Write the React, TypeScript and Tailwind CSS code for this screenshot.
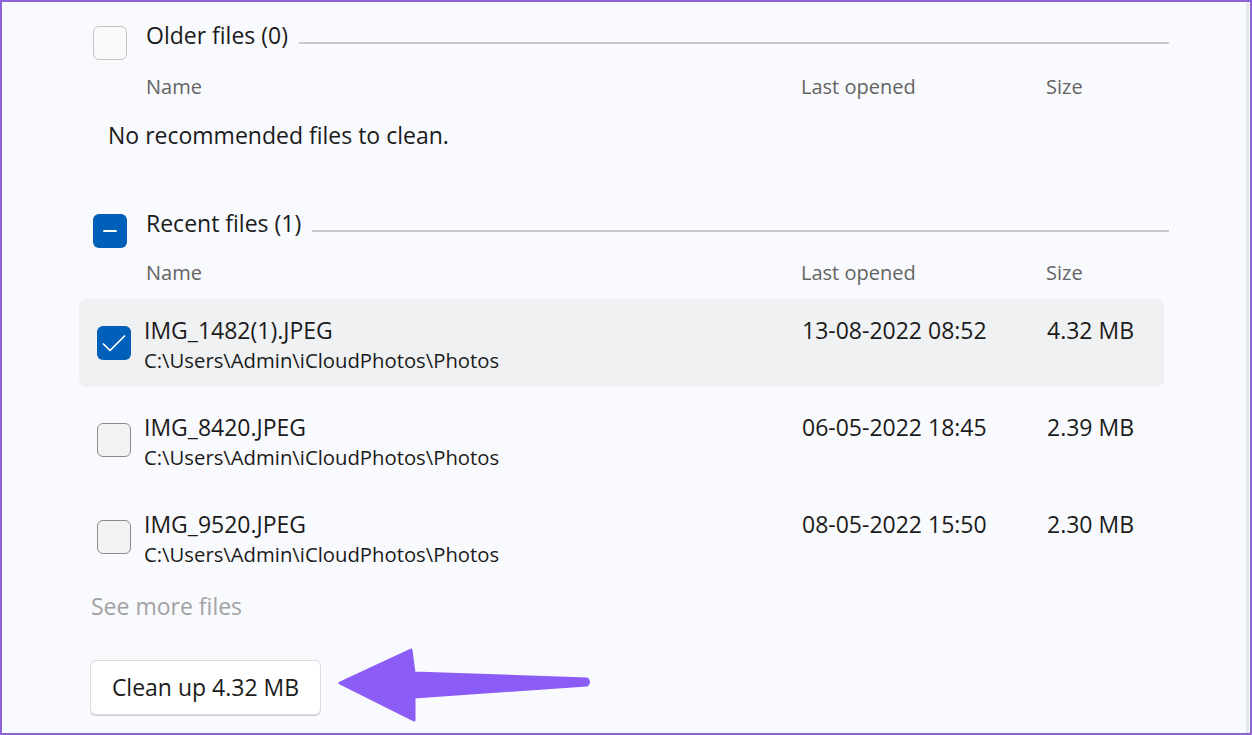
import React from "react";

const FILES = [
  { name: "IMG_1482(1).JPEG", path: "C:\\Users\\Admin\\iCloudPhotos\\Photos", opened: "13-08-2022 08:52", size: "4.32 MB", checked: true },
  { name: "IMG_8420.JPEG", path: "C:\\Users\\Admin\\iCloudPhotos\\Photos", opened: "06-05-2022 18:45", size: "2.39 MB", checked: false },
  { name: "IMG_9520.JPEG", path: "C:\\Users\\Admin\\iCloudPhotos\\Photos", opened: "08-05-2022 15:50", size: "2.30 MB", checked: false },
];

function Box({ state, faded }: { state: "off" | "on" | "mixed"; faded?: boolean }) {
  if (state === "off") {
    return (
      <div
        className={`w-[34px] h-[34px] shrink-0 rounded-[6px] border-[1.5px] ${
          faded ? "border-[#c6c6c8] bg-[#fafafb]" : "border-[#8a8a8a] bg-[#f3f3f4]"
        }`}
      />
    );
  }
  return (
    <div className="w-[34px] h-[34px] shrink-0 rounded-[6px] bg-[#005fb8] flex items-center justify-center">
      {state === "on" ? (
        <svg width="34" height="34" viewBox="0 0 34 34" fill="none">
          <path d="M6.5 18 L13 24.5 L27.5 10" stroke="white" strokeWidth="1.7" strokeLinecap="round" strokeLinejoin="round" />
        </svg>
      ) : (
        <div className="w-[14px] h-[2px] bg-white rounded" />
      )}
    </div>
  );
}

function SectionHeader({ title, state, faded }: { title: string; state: "off" | "mixed"; faded?: boolean }) {
  return (
    <div className="flex items-center h-[34px]">
      <Box state={state} faded={faded} />
      <span className="ml-[19px] text-[23px] leading-[30px] text-[#1b1b1b] -mt-[16px]">{title}</span>
      <div className="flex-1 ml-[11px] h-[2px] bg-[#c9cacc]" />
    </div>
  );
}

function ColumnHeads() {
  return (
    <div className="grid grid-cols-[655px_245px_1fr] pl-[53px] text-[20px] leading-[26px] text-[#646464]">
      <span>Name</span>
      <span>Last opened</span>
      <span>Size</span>
    </div>
  );
}

export default function App() {
  return (
    <div
      className="relative w-[1252px] h-[735px] overflow-hidden border-2 border-[#8d63d8] bg-[#f9fafd] text-[#1b1b1b]"
      style={{ fontFamily: '"Open Sans", "Noto Sans", sans-serif' }}
    >
      <div className="absolute top-0 bottom-0 right-[1px] w-[3px] bg-[#e3e7ef]" />

      <div className="flex flex-col pt-[24px] pl-[91px] pr-[81px]">
        <SectionHeader title="Older files (0)" state="off" faded />
        <div className="mt-[14px]">
          <ColumnHeads />
        </div>
        <p className="mt-[20px] ml-[15px] text-[23px] leading-[30px]">No recommended files to clean.</p>

        <div className="mt-[64px]">
          <SectionHeader title="Recent files (1)" state="mixed" />
        </div>
        <div className="mt-[12px]">
          <ColumnHeads />
        </div>

        <div className="mt-[13px] -ml-[14px] mr-[5px] flex flex-col gap-[9px]">
          {FILES.map((f) => (
            <div
              key={f.name}
              className={`h-[88px] rounded-[7px] flex pl-[18px] ${f.checked ? "bg-[#f0f1f3]" : ""}`}
            >
              <div className="self-center">
                <Box state={f.checked ? "on" : "off"} />
              </div>
              <div className="ml-[13px] pt-[16px] w-[658px] flex flex-col">
                <span className="text-[23px] leading-[30px]">{f.name}</span>
                <span className="text-[20.3px] leading-[28px] mt-[1px]">{f.path}</span>
              </div>
              <div className="pt-[16px] w-[245px] text-[23px] leading-[30px]">{f.opened}</div>
              <div className="pt-[16px] text-[23px] leading-[30px]">{f.size}</div>
            </div>
          ))}
        </div>

        <p className="mt-[10px] -ml-[2px] text-[23px] leading-[30px] text-[#a2a2a4]">See more files</p>

        <div className="mt-[39px] -ml-[3px]">
          <button className="w-[231px] h-[55px] rounded-[6px] bg-white border border-[#dcdcde] shadow-[0_1px_0_#cfcfd2] text-[23px] text-[#1b1b1b]">
            Clean up 4.32 MB
          </button>
        </div>
      </div>

      <svg
        className="absolute -left-[2px] -top-[2px] pointer-events-none"
        width="1252"
        height="735"
        viewBox="0 0 1252 735"
      >
        <path
          d="M340 683 L411 650 L414 673 L587 679 Q590 682 587 685 L414 697 L414 720 Z"
          fill="#8b5cf6"
          stroke="#8b5cf6"
          strokeWidth="3"
          strokeLinejoin="round"
        />
      </svg>
    </div>
  );
}
